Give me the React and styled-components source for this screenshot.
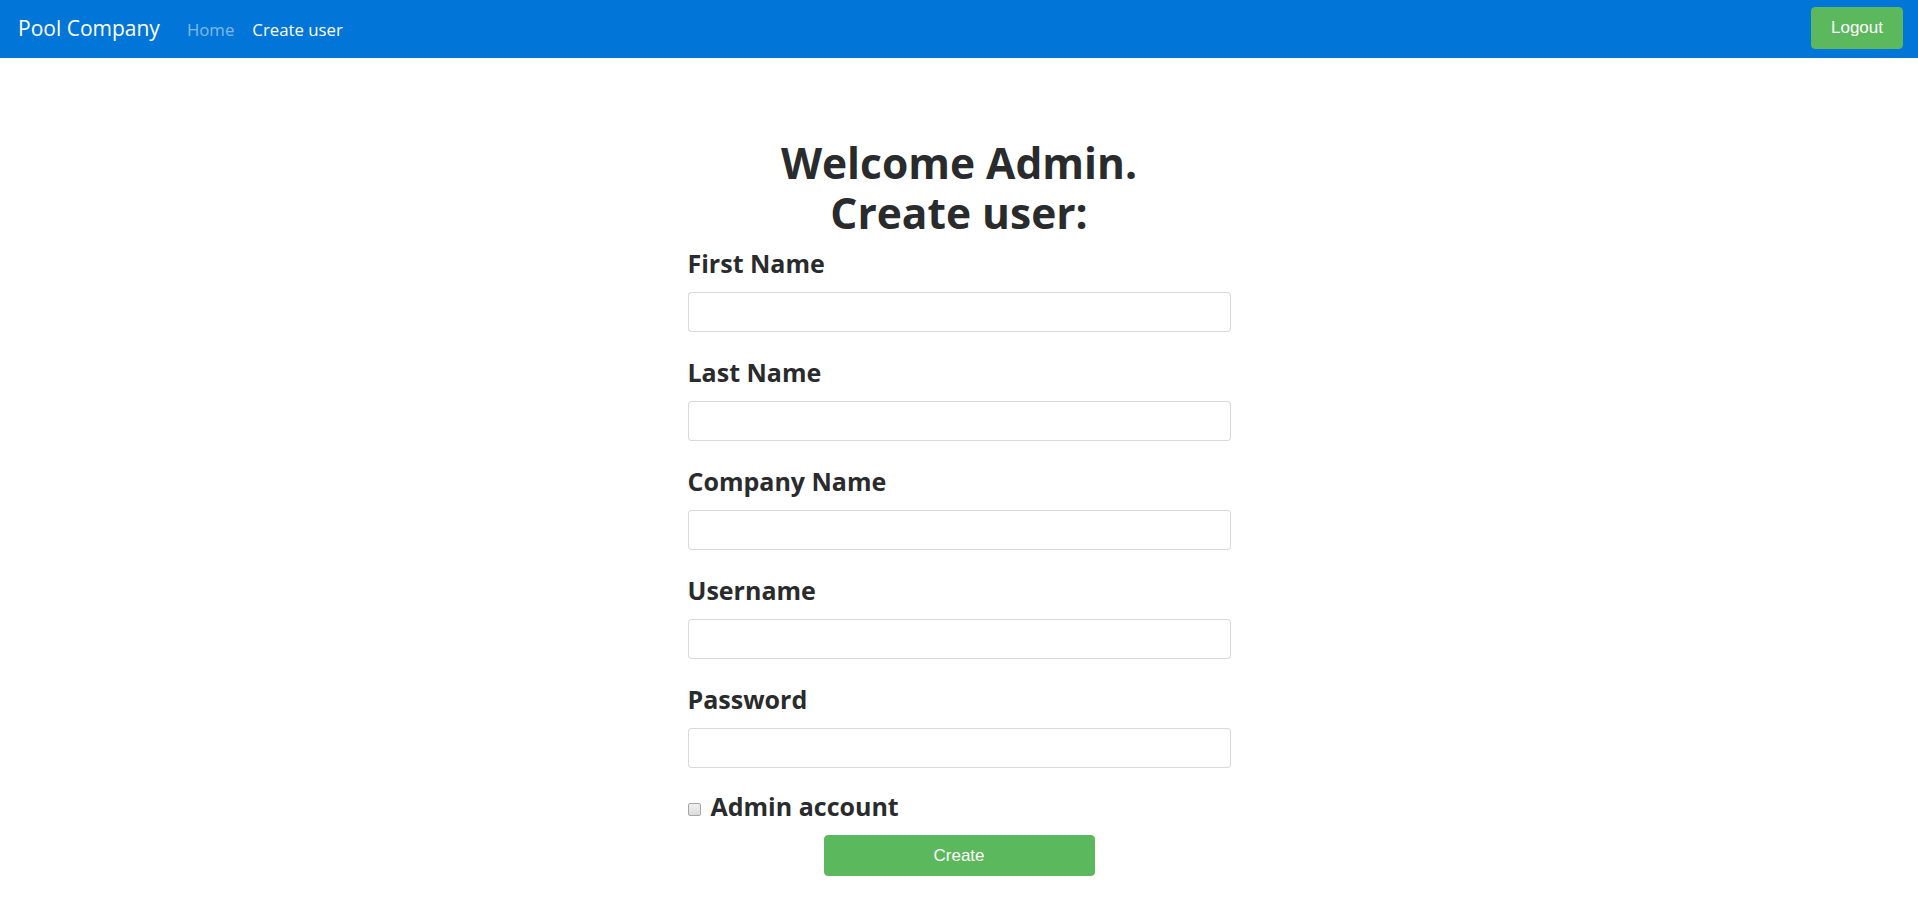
import React from 'react'
import styled, { createGlobalStyle } from 'styled-components'

const Global = createGlobalStyle`
  * { box-sizing: border-box; }
  body {
    margin: 0;
    background: #fff;
    font-family: "Open Sans", "Noto Sans", sans-serif;
    color: #292b2c;
  }
`

const Navbar = styled.nav`
  height: 58px;
  background: #0275d8;
  display: flex;
  align-items: center;
  padding: 0 15px 0 18px;
`
const Brand = styled.a`
  font-size: 21px;
  color: #fff;
  text-decoration: none;
  margin-right: 27px;
  margin-top: -2px;
`
const NavLinks = styled.div`
  display: flex;
  gap: 18px;
  flex: 1;
`
const NavLink = styled.a`
  font-size: 16.8px;
  color: ${p => (p.$muted ? 'rgba(255,255,255,.5)' : '#fff')};
  text-decoration: none;
`
const Button = styled.button`
  font-family: "Liberation Sans", Arial, sans-serif;
  background: #5cb85c;
  border: 1px solid #5cb85c;
  border-radius: 4px;
  color: #fff;
  font-size: 17px;
  height: ${p => p.$h || 42}px;
  width: ${p => p.$w}px;
  padding: 0;
  cursor: pointer;
`
const LogoutButton = styled(Button)`
  margin-top: -2px;
`
const Main = styled.main`
  width: 543px;
  margin: 80px auto 0;
  display: flex;
  flex-direction: column;
`
const Title = styled.h1`
  margin: 0 0 9px;
  font-size: 42.5px;
  line-height: 50px;
  font-weight: 700;
  text-align: center;
`
const Group = styled.div`
  display: flex;
  flex-direction: column;
  margin-bottom: 24px;
`
const Label = styled.label`
  font-size: 25px;
  line-height: 32px;
  font-weight: 700;
  margin-bottom: 13px;
`
const Input = styled.input`
  height: 40px;
  width: 100%;
  border: 1px solid rgba(0, 0, 0, 0.15);
  border-radius: 4px;
  padding: 0 12px;
  font-size: 16px;
  font-family: inherit;
`
const CheckRow = styled.label`
  display: flex;
  align-items: center;
  gap: 10px;
  font-size: 25px;
  line-height: 32px;
  font-weight: 700;
  margin: -2px 0 13px;
`
const Check = styled.input`
  appearance: none;
  margin: 0;
  width: 13px;
  height: 13px;
  border: 1px solid #a6a6a6;
  border-radius: 2px;
  background: linear-gradient(#f0f0f0, #dcdcdc);
  position: relative;
  top: 3px;
`
const Actions = styled.div`
  display: flex;
  justify-content: center;
`

const fields = ['First Name', 'Last Name', 'Company Name', 'Username', 'Password']

export default function App() {
  return (
    <>
      <Global />
      <Navbar>
        <Brand href="#">Pool Company</Brand>
        <NavLinks>
          <NavLink href="#" $muted>Home</NavLink>
          <NavLink href="#">Create user</NavLink>
        </NavLinks>
        <LogoutButton $w={92}>Logout</LogoutButton>
      </Navbar>
      <Main>
        <Title>Welcome Admin.<br />Create user:</Title>
        {fields.map(f => (
          <Group key={f}>
            <Label>{f}</Label>
            <Input type={f === 'Password' ? 'password' : 'text'} />
          </Group>
        ))}
        <CheckRow>
          <Check type="checkbox" />
          Admin account
        </CheckRow>
        <Actions>
          <Button $w={271} $h={41}>Create</Button>
        </Actions>
      </Main>
    </>
  )
}
